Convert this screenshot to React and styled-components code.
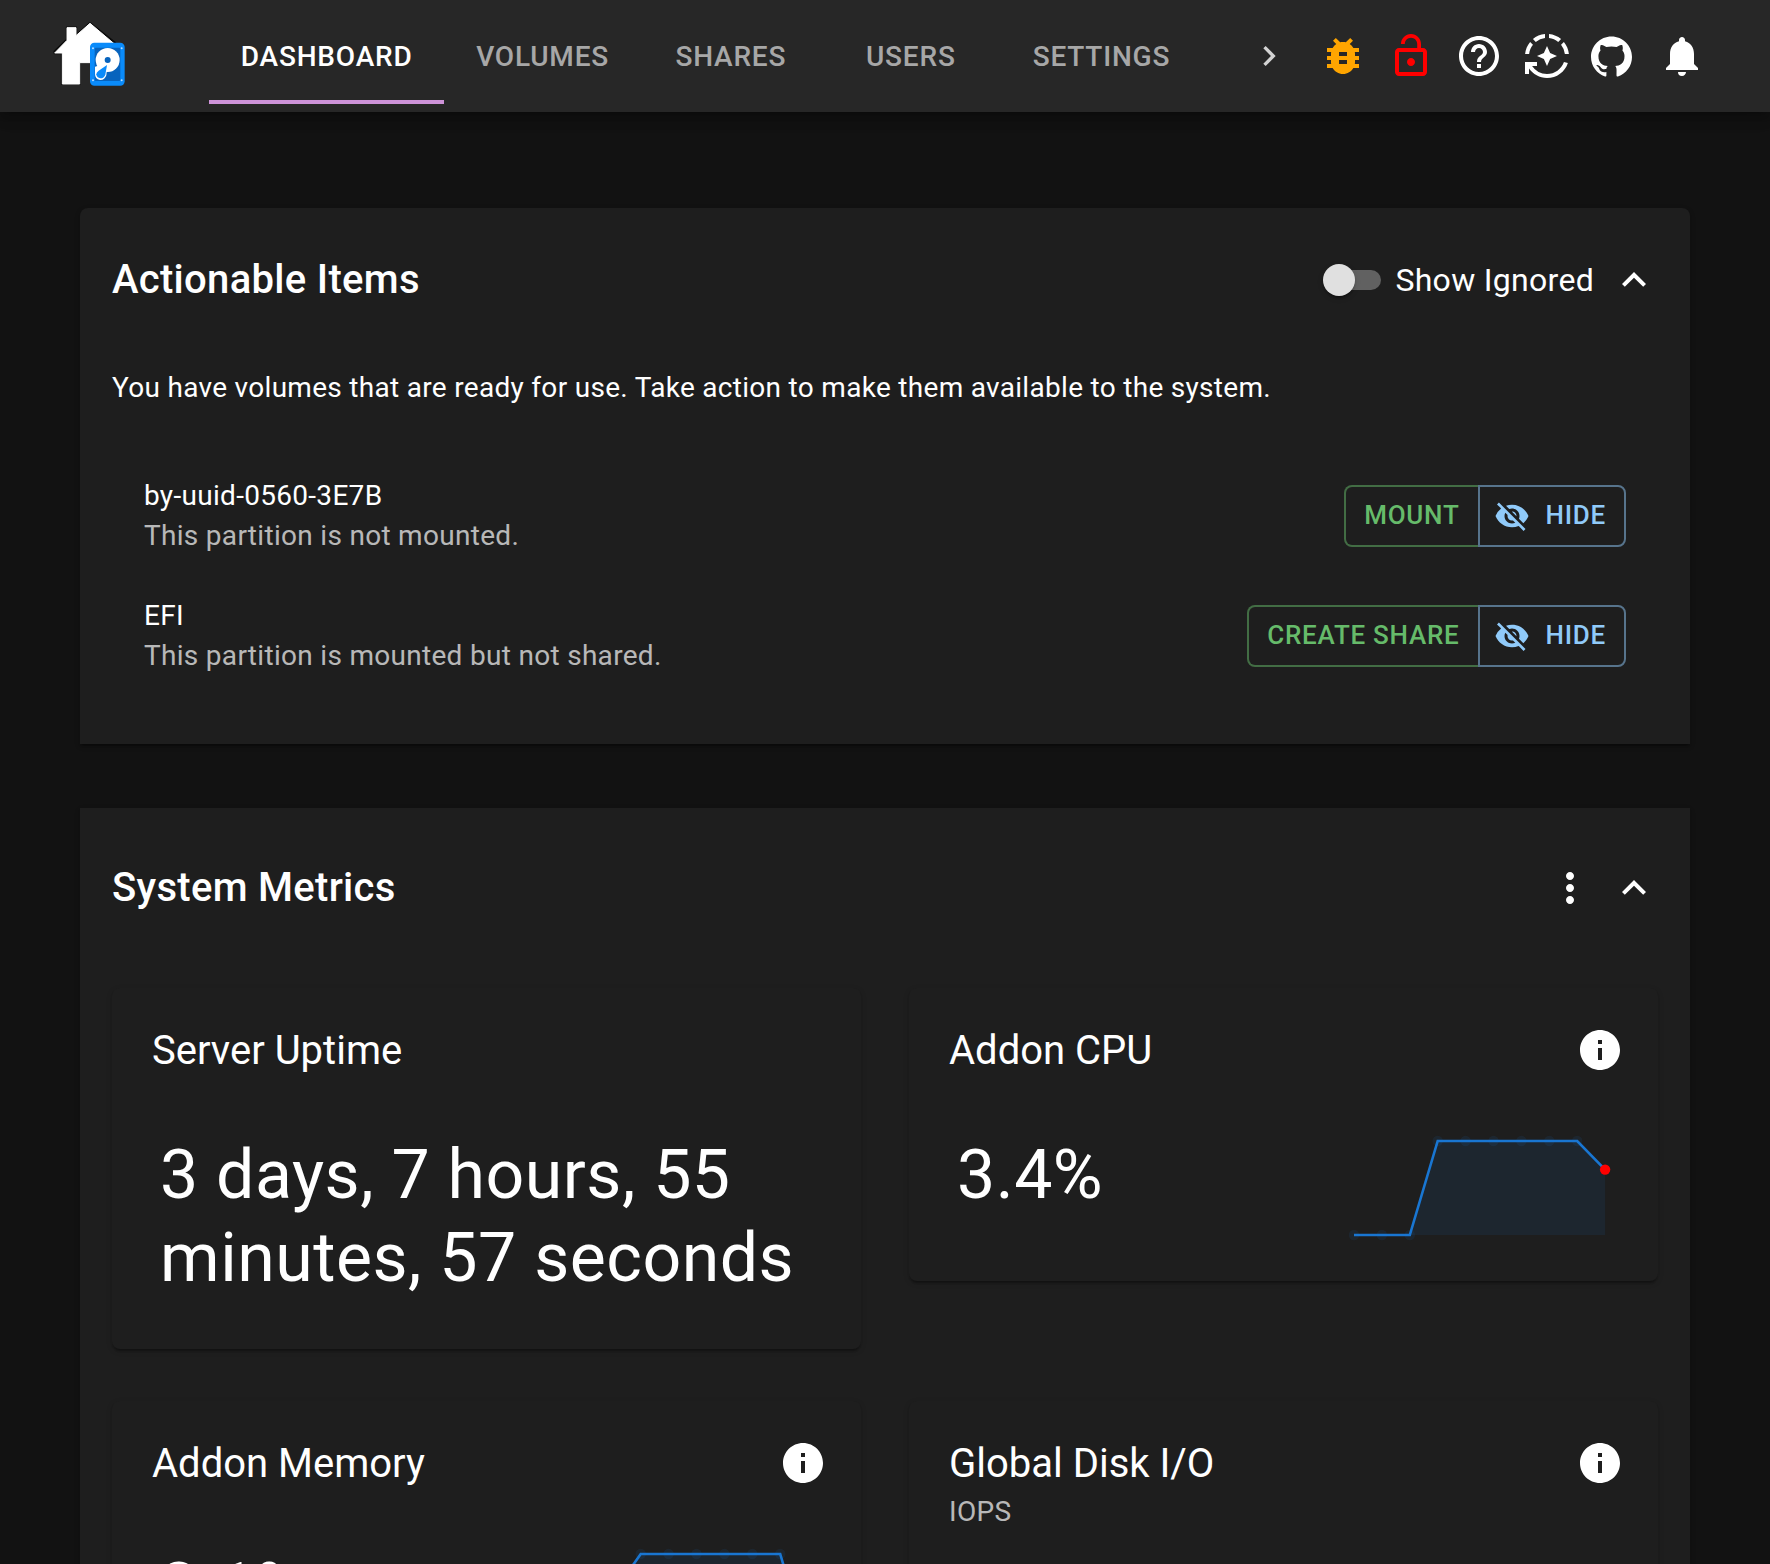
import React from "react";
import styled, { createGlobalStyle } from "styled-components";
import {
  MdAutoMode,
  MdBugReport,
  MdExpandLess,
  MdHelpOutline,
  MdInfo,
  MdKeyboardArrowRight,
  MdLockOpen,
  MdMoreVert,
  MdNotifications,
  MdVisibilityOff,
} from "react-icons/md";
import { SiGithub } from "react-icons/si";

const GlobalStyle = createGlobalStyle`
  *, *::before, *::after { box-sizing: border-box; }
  body {
    margin: 0;
    background: #121212;
    color: #fff;
    font-family: Roboto, "Liberation Sans", sans-serif;
    -webkit-font-smoothing: antialiased;
  }
  svg { display: block; flex: none; }
`;

const Page = styled.div`
  display: flex;
  flex-direction: column;
  height: 100vh;
  overflow: hidden;
`;

const AppBar = styled.header`
  flex: none;
  display: flex;
  align-items: center;
  height: 112px;
  padding: 0 48px 0 45px;
  background: #272727;
  box-shadow: 0 4px 8px -2px rgba(0, 0, 0, 0.2), 0 8px 10px rgba(0, 0, 0, 0.14),
    0 2px 20px rgba(0, 0, 0, 0.12);
`;

const Brand = styled.div`
  width: 164px;
  padding-bottom: 3px;
`;

const Tabs = styled.nav`
  display: flex;
  flex: 1;
  min-width: 0;
  height: 96px;
  overflow: hidden;
`;

const Tab = styled.a`
  flex: none;
  display: flex;
  align-items: center;
  justify-content: center;
  min-width: 180px;
  padding: 4px 31.8px 0;
  border-bottom: 4px solid ${(p) => (p.$active ? "#ce93d8" : "transparent")};
  color: ${(p) => (p.$active ? "#fff" : "rgba(255, 255, 255, 0.6)")};
  font-size: 28px;
  font-weight: 500;
  line-height: 1.25;
  letter-spacing: 0.02857em;
  text-transform: uppercase;
`;

const ScrollButton = styled.div`
  flex: none;
  display: flex;
  justify-content: center;
  width: 80px;
  opacity: 0.8;
`;

const Action = styled.div`
  flex: none;
  display: flex;
  align-items: center;
  justify-content: center;
  width: ${(p) => p.$width || 68}px;
  color: ${(p) => p.$color || "#fff"};
`;

const Main = styled.main`
  display: flex;
  flex-direction: column;
  gap: 64px;
  padding: 96px 80px 0;
`;

const Panel = styled.section`
  flex: none;
  padding: ${(p) => p.$top}px 32px 32px;
  border-radius: ${(p) => (p.$first ? "8px 8px 0 0" : "0")};
  background: #1e1e1e;
  box-shadow: 0 4px 2px -2px rgba(0, 0, 0, 0.2), 0 2px 2px rgba(0, 0, 0, 0.14),
    0 2px 6px rgba(0, 0, 0, 0.12);
`;

const PanelHeader = styled.div`
  display: flex;
  align-items: center;
  gap: 16px;
  height: 80px;
`;

const PanelTitle = styled.h2`
  flex: 1;
  margin: 0;
  font-size: 40px;
  font-weight: 500;
  line-height: 1.6;
  letter-spacing: 0.0075em;
`;

const SwitchLabel = styled.label`
  display: flex;
  align-items: center;
  font-size: 32px;
  line-height: 1.5;
  letter-spacing: 0.00938em;
`;

const SwitchTrack = styled.span`
  display: flex;
  align-items: center;
  width: 52px;
  height: 20px;
  margin: 0 14px;
  border-radius: 10px;
  background: #616161;
`;

const SwitchThumb = styled.span`
  flex: none;
  width: 32px;
  height: 32px;
  margin-left: -6px;
  border-radius: 50%;
  background: #e0e0e0;
  box-shadow: 0 4px 2px -2px rgba(0, 0, 0, 0.2), 0 2px 2px rgba(0, 0, 0, 0.14),
    0 2px 6px rgba(0, 0, 0, 0.12);
`;

const Body = styled.p`
  margin: 0;
  color: ${(p) => (p.$muted ? "rgba(255, 255, 255, 0.7)" : "#fff")};
  font-size: 28px;
  line-height: 40px;
  letter-spacing: 0.01071em;
`;

const Intro = styled(Body)`
  margin-top: 48px;
`;

const ItemList = styled.ul`
  margin: 48px 0 16px;
  padding: 0;
  list-style: none;
`;

const Item = styled.li`
  display: flex;
  align-items: center;
  justify-content: space-between;
  height: 120px;
  padding: 0 32px;
`;

const ButtonGroup = styled.div`
  display: flex;
`;

const Button = styled.button`
  display: flex;
  align-items: center;
  gap: 16px;
  height: 62px;
  padding: 0 18px 2px;
  border: 2px solid ${(p) => (p.$success ? "rgba(102, 187, 106, 0.5)" : "rgba(144, 202, 249, 0.5)")};
  border-right-width: ${(p) => (p.$success ? 0 : 2)}px;
  border-radius: ${(p) => (p.$success ? "8px 0 0 8px" : "0 8px 8px 0")};
  background: none;
  color: ${(p) => (p.$success ? "#66bb6a" : "#90caf9")};
  font: 500 26px/45px Roboto, "Liberation Sans", sans-serif;
  letter-spacing: 0.02857em;
  text-transform: uppercase;

  svg { margin: 2px 0 0 -4px; }
`;

const MetricGrid = styled.div`
  display: grid;
  grid-template-columns: 1fr 1fr;
  align-items: start;
  gap: 52px 48px;
  margin-top: 60px;
`;

const MetricCard = styled.article`
  padding: 35px 34px 48px 40px;
  border-radius: 8px;
  background: #1e1e1e;
  box-shadow: 0 4px 2px -2px rgba(0, 0, 0, 0.2), 0 2px 2px rgba(0, 0, 0, 0.14),
    0 2px 6px rgba(0, 0, 0, 0.12);
`;

const MetricHeader = styled.div`
  display: flex;
  align-items: flex-start;
  justify-content: space-between;

  svg { margin-top: 3px; }
`;

const MetricTitle = styled.h3`
  margin: 0;
  padding-top: 1px;
  font-size: 40px;
  font-weight: 400;
  line-height: 54px;
  letter-spacing: 0;
`;

const MetricSubtitle = styled(Body)`
  padding-top: 1px;
`;

const MetricBody = styled.div`
  display: flex;
  align-items: flex-start;
  justify-content: space-between;
  margin-top: 55px;
  padding: 0 14px 0 8px;
`;

const MetricValue = styled.div`
  padding: 1px 0;
  font-size: 68px;
  line-height: 83px;
  letter-spacing: 0.00735em;
`;

function Logo() {
  return (
    <svg width="90" height="90" viewBox="0 0 270 270">
      <path
        d="M135 39 L211 98 V222 H50 V130 H28 V124 L65 89 V52 H94 V75 Z"
        fill="#0c0c0c"
        stroke="#0c0c0c"
        strokeWidth="5"
        strokeLinejoin="round"
      />
      <path d="M106 160 H138 V228 H106 Z" fill="#272727" />
      <path
        d="M135 40 L220 112 V158 H104 V222 H52 V129 H29 L66 91 V53 H93 V77 Z"
        fill="#fff"
        stroke="#fff"
        strokeWidth="3"
        strokeLinejoin="round"
      />
      <rect x="135" y="98" width="104" height="129" rx="13" fill="#0a8bfa" />
      <rect x="149" y="113" width="77" height="100" rx="4" fill="#0763bd" />
      <g fill="#b9ddff">
        <circle cx="144" cy="115" r="3" />
        <circle cx="230" cy="115" r="3" />
        <circle cx="144" cy="211" r="3" />
        <circle cx="230" cy="211" r="3" />
      </g>
      <circle cx="188" cy="150" r="36" fill="#fff" />
      <path d="M188 158 L184 196 Q179 211 165 210 Q150 207 150 192 L150 170 Z" fill="#fff" />
      <path d="M186 165 L181 194 Q177 205 166 205 Q155 203 154 193 Q154 187 161 182 Z" fill="#0a8bfa" />
      <circle cx="188" cy="150" r="9" fill="#0763bd" />
    </svg>
  );
}

function Sparkline({ points }) {
  const step = 27.9;
  const floor = 102;
  const coords = points.map((y, i) => [i * step, y]);
  const line = coords.map((c) => c.join(",")).join(" ");
  const last = coords[coords.length - 1];
  return (
    <svg width="256" height="100" overflow="visible">
      <polygon points={`0,${floor} ${line} ${last[0]},${floor}`} fill="#1976d2" fillOpacity="0.1" />
      {coords.slice(0, -1).map(([x, y]) => (
        <circle key={x} cx={x} cy={y} r="5.2" fill="#1976d2" fillOpacity="0.1" />
      ))}
      <polyline points={line} fill="none" stroke="#1976d2" strokeWidth="2.6" />
      <circle cx={last[0]} cy={last[1]} r="5.2" fill="red" />
    </svg>
  );
}

function Metric({ title, subtitle, value, points, info }) {
  return (
    <MetricCard>
      <MetricHeader>
        <div>
          <MetricTitle>{title}</MetricTitle>
          {subtitle && <MetricSubtitle $muted>{subtitle}</MetricSubtitle>}
        </div>
        {info && <MdInfo size={48} />}
      </MetricHeader>
      {value && (
        <MetricBody>
          <MetricValue>{value}</MetricValue>
          {points && <Sparkline points={points} />}
        </MetricBody>
      )}
    </MetricCard>
  );
}

const tabs = ["Dashboard", "Volumes", "Shares", "Users", "Settings"];

const items = [
  { name: "by-uuid-0560-3E7B", note: "This partition is not mounted.", action: "Mount" },
  { name: "EFI", note: "This partition is mounted but not shared.", action: "Create Share" },
];

export default function App() {
  return (
    <Page>
      <GlobalStyle />
      <AppBar>
        <Brand>
          <Logo />
        </Brand>
        <Tabs>
          {tabs.map((name, i) => (
            <Tab key={name} $active={i === 0}>
              {name}
            </Tab>
          ))}
        </Tabs>
        <ScrollButton>
          <MdKeyboardArrowRight size={40} />
        </ScrollButton>
        <Action $color="orange"><MdBugReport size={48} /></Action>
        <Action $color="red"><MdLockOpen size={48} /></Action>
        <Action><MdHelpOutline size={48} /></Action>
        <Action><MdAutoMode size={48} /></Action>
        <Action $width={61}><SiGithub size={41} /></Action>
        <Action $width={80}><MdNotifications size={48} /></Action>
      </AppBar>
      <Main>
        <Panel $first $top={32}>
          <PanelHeader>
            <PanelTitle>Actionable Items</PanelTitle>
            <SwitchLabel>
              <SwitchTrack>
                <SwitchThumb />
              </SwitchTrack>
              Show Ignored
            </SwitchLabel>
            <MdExpandLess size={48} />
          </PanelHeader>
          <Intro>
            You have volumes that are ready for use. Take action to make them available to the system.
          </Intro>
          <ItemList>
            {items.map((item) => (
              <Item key={item.name}>
                <div>
                  <Body>{item.name}</Body>
                  <Body $muted>{item.note}</Body>
                </div>
                <ButtonGroup>
                  <Button $success>{item.action}</Button>
                  <Button>
                    <MdVisibilityOff size={36} />
                    Hide
                  </Button>
                </ButtonGroup>
              </Item>
            ))}
          </ItemList>
        </Panel>
        <Panel $top={40}>
          <PanelHeader>
            <PanelTitle>System Metrics</PanelTitle>
            <MdMoreVert size={48} />
            <MdExpandLess size={48} />
          </PanelHeader>
          <MetricGrid>
            <Metric title="Server Uptime" value="3 days, 7 hours, 55 minutes, 57 seconds" />
            <Metric
              info
              title="Addon CPU"
              value="3.4%"
              points={[102, 102, 102, 8, 8, 8, 8, 8, 8, 36.6]}
            />
            <Metric
              info
              title="Addon Memory"
              value="2.1%"
              points={[48, 48, 48, 8, 8, 8, 8, 8, 8, 102]}
            />
            <Metric info title="Global Disk I/O" subtitle="IOPS" />
          </MetricGrid>
        </Panel>
      </Main>
    </Page>
  );
}
